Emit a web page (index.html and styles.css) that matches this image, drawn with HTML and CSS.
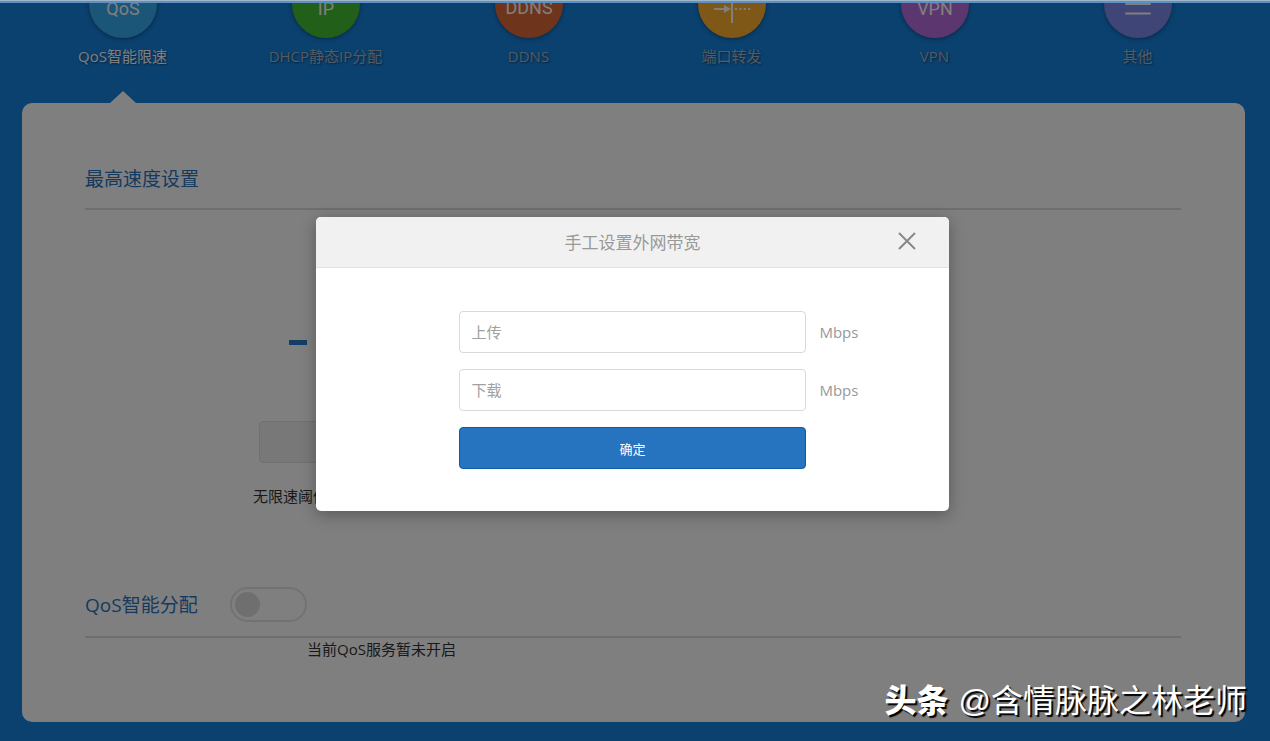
FILE: index.html
```
<!DOCTYPE html>
<html lang="zh-CN">
<head>
    <meta charset="UTF-8">
    <meta name="viewport" content="width=device-width, initial-scale=1.0">
    <title>QoS智能限速</title>
    <link rel="stylesheet" href="styles.css">
</head>
<body>
    <div class="page">
        <div class="top-line"></div>

        <nav class="nav">
            <a href="#qos" class="nav-item active">
                <svg class="nav-icon qos" viewBox="0 0 68 68"><text x="34" y="45">QoS</text></svg>
                <span>QoS智能限速</span>
            </a>
            <a href="#dhcp" class="nav-item">
                <svg class="nav-icon dhcp" viewBox="0 0 68 68"><text x="34" y="45">IP</text></svg>
                <span>DHCP静态IP分配</span>
            </a>
            <a href="#ddns" class="nav-item">
                <svg class="nav-icon ddns" viewBox="0 0 68 68"><text x="34" y="44">DDNS</text></svg>
                <span>DDNS</span>
            </a>
            <a href="#port" class="nav-item">
                <svg class="nav-icon port" viewBox="0 0 68 68">
                    <path d="M34 16v37" stroke-width="2"/>
                    <path d="M16 39h12" stroke-width="2"/>
                    <path d="M26 35l7 4-7 4z" fill="#fff" stroke="none"/>
                    <path d="M37 39h16M37 31h8" stroke-width="2" stroke-dasharray="2 2.4"/>
                </svg>
                <span>端口转发</span>
            </a>
            <a href="#vpn" class="nav-item">
                <svg class="nav-icon vpn" viewBox="0 0 68 68"><text x="34" y="45">VPN</text></svg>
                <span>VPN</span>
            </a>
            <a href="#other" class="nav-item">
                <svg class="nav-icon other" viewBox="0 0 68 68">
                    <path d="M22 25h24M22 34h24M22 43.5h24" stroke-width="2" stroke-linecap="round"/>
                </svg>
                <span>其他</span>
            </a>
        </nav>

        <main class="panel">
            <section>
                <h2 class="title">最高速度设置</h2>
                <div class="speed">
                    <button type="button" class="minus" aria-label="减少"></button>
                    <input type="text" id="threshold" class="speed-value" disabled>
                    <label for="threshold" class="speed-label">无限速阈值</label>
                </div>
            </section>

            <section>
                <div class="title title-switch">
                    <label for="qosSwitch">QoS智能分配</label>
                    <input type="checkbox" id="qosSwitch" class="switch">
                </div>
                <p class="status">当前QoS服务暂未开启</p>
            </section>
        </main>

        <div class="overlay">
            <div class="modal" role="dialog" aria-labelledby="modalTitle">
                <div class="modal-header">
                    <h3 id="modalTitle">手工设置外网带宽</h3>
                    <button type="button" class="close" aria-label="关闭">
                        <svg viewBox="0 0 18 18"><path d="M1 1l16 16M17 1L1 17"/></svg>
                    </button>
                </div>
                <form class="modal-body">
                    <input type="text" id="upload" class="field" placeholder="上传">
                    <label for="upload" class="unit">Mbps</label>
                    <input type="text" id="download" class="field" placeholder="下载">
                    <label for="download" class="unit">Mbps</label>
                    <button type="button" class="submit">确定</button>
                </form>
            </div>
        </div>

        <div class="signature"><b>头条</b><span>@含情脉脉之林老师</span></div>
    </div>
</body>
</html>
```
FILE: styles.css
```
* {
    margin: 0;
    padding: 0;
    box-sizing: border-box;
}

body {
    font-family: "Open Sans", "Noto Sans CJK SC", sans-serif;
    font-size: 15px;
    line-height: 24px;
    color: #333;
}

button,
input {
    font-family: inherit;
}

.page {
    position: relative;
    display: flex;
    flex-direction: column;
    min-height: 100vh;
    overflow: hidden;
    background: #1682de;
}

.top-line {
    height: 3px;
    background: #5b92c6;
    border-top: 1px solid #a3b4c6;
}

/* navigation */
.nav {
    display: grid;
    grid-template-columns: repeat(6, 1fr);
    height: 100px;
    margin: 0 31px 0 21px;
    overflow: hidden;
}

.nav-item {
    position: relative;
    display: flex;
    flex-direction: column;
    align-items: center;
    gap: 6px;
    margin-top: -33px;
    color: #a6b6c8;
    text-decoration: none;
    text-shadow: 1px 1px 2px rgba(0, 0, 0, 0.5);
}

.nav-item.active {
    color: #fff;
}

.nav-item.active::after {
    content: "";
    position: absolute;
    bottom: 0;
    border: 13px solid transparent;
    border-top: 0;
    border-bottom: 12px solid #fff;
}

.nav-icon {
    flex: none;
    width: 68px;
    height: 68px;
    border-radius: 50%;
    box-shadow: 0 1px 4px rgba(0, 0, 0, 0.4);
    fill: none;
    stroke: #fff;
}

.nav-icon text {
    font-family: Roboto, sans-serif;
    font-size: 18px;
    text-anchor: middle;
    text-shadow: none;
    fill: #fff;
    stroke: none;
}

.qos { background: #36acf2; }
.dhcp { background: #44be30; }
.ddns { background: #dc6838; }
.port { background: #ffae2c; }
.vpn { background: #b86ede; }
.other { background: #808af0; }

/* content */
.panel {
    flex: 1;
    margin: 0 25px 19px 22px;
    padding: 62px 64px 58px 63px;
    background: #fff;
    border-radius: 10px;
}

.title {
    padding-bottom: 15px;
    border-bottom: 2px solid #dcdcdc;
    font-size: 19px;
    font-weight: normal;
    line-height: 28px;
    color: #2b74c0;
}

.speed {
    display: flex;
    flex-direction: column;
    align-items: flex-start;
    padding: 130px 0 79px 168px;
}

.minus {
    width: 18px;
    height: 5px;
    margin: 0 0 76px 36px;
    border: 0;
    background: #2b7bcc;
}

.speed-value {
    width: 220px;
    height: 42px;
    margin: 0 0 21px 6px;
    background: #f0f0f0;
    border: 1px solid #e2e2e2;
    border-radius: 4px;
}

.title-switch {
    display: flex;
    align-items: center;
    gap: 32px;
    padding-bottom: 14px;
}

.switch {
    appearance: none;
    width: 77px;
    height: 35px;
    padding: 3px;
    border: 2px solid #e4e4e4;
    border-radius: 18px;
}

.switch::before {
    content: "";
    display: block;
    width: 25px;
    height: 25px;
    border-radius: 50%;
    background: #dedede;
}

.status {
    padding-left: 222px;
    line-height: 22px;
}

/* dialog */
.overlay {
    position: absolute;
    inset: 3px 0 0;
    display: flex;
    justify-content: center;
    align-items: flex-start;
    padding: 214px 5px 0 0;
    background: rgba(0, 0, 0, 0.5);
}

.modal {
    width: 50%;
    min-width: 480px;
    overflow: hidden;
    background: #fff;
    border-radius: 5px;
    box-shadow: 0 4px 16px rgba(0, 0, 0, 0.3);
    color: #999;
}

.modal-header {
    position: relative;
    padding: 14px 13px 12px;
    background: #f1f1f1;
    border-bottom: 1px solid #e2e2e2;
    text-align: center;
}

.modal-header h3 {
    font-size: 17px;
    font-weight: normal;
}

.close {
    position: absolute;
    top: 15px;
    right: 33px;
    width: 18px;
    height: 18px;
    border: 0;
    background: none;
    cursor: pointer;
}

.close svg {
    display: block;
    fill: none;
    stroke: #888;
    stroke-width: 2;
}

.modal-body {
    display: grid;
    grid-template-columns: 1fr 55% 1fr;
    row-gap: 16px;
    align-items: center;
    padding: 43px 0 42px;
}

.field,
.submit {
    grid-column: 2;
    height: 42px;
    border-radius: 4px;
}

.field {
    min-width: 0;
    padding: 0 12px;
    border: 1px solid #d9d9d9;
    font-size: 15px;
}

.field::placeholder {
    color: #a0a0a0;
}

.unit {
    padding-left: 13px;
}

.submit {
    background: #2673bf;
    border: 1px solid #105aa6;
    color: #fff;
    font-size: 13px;
    cursor: pointer;
}

.signature {
    position: absolute;
    right: 23px;
    bottom: 20px;
    display: flex;
    gap: 10px;
    font-family: "Liberation Sans", "Noto Sans CJK SC", sans-serif;
    font-size: 32px;
    line-height: 40px;
    color: #fff;
    text-shadow: 2px 2px 1px #000;
}

.signature b {
    font-weight: 900;
}
```
